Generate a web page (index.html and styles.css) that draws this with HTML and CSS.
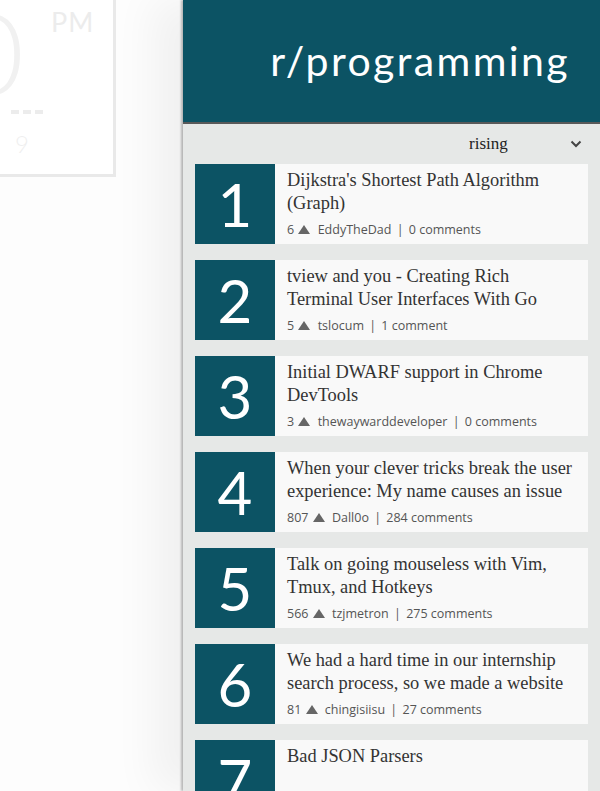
FILE: index.html
```html
<!DOCTYPE html>
<html>
<head>
<meta charset="utf-8">
<link rel="stylesheet" href="styles.css">
</head>
<body>
<div class="page">
  <div class="backdrop">
    <div class="clock">
      <span class="clock-big">0</span>
      <span class="clock-ampm">PM</span>
      <div class="clock-dashes"><i></i><i></i><i></i></div>
      <span class="clock-date">9</span>
    </div>
  </div>
  <aside class="panel">
    <header class="panel-head"><h1>r/programming</h1></header>
    <div class="sortbar">
      <span class="sort-label">rising</span>
      <svg class="chev" width="12" height="8" viewBox="0 0 12 8"><path d="M1.5 1.5 L6 6 L10.5 1.5" fill="none" stroke="#444" stroke-width="2"/></svg>
    </div>
    <ul class="posts">
      <li class="post"><div class="rank">1</div><div class="body"><div class="title">Dijkstra's Shortest Path Algorithm (Graph)</div><div class="meta">6 <span class="up"></span> EddyTheDad <span class="sep">|</span> 0 comments</div></div></li>
      <li class="post"><div class="rank">2</div><div class="body"><div class="title">tview and you - Creating Rich Terminal User Interfaces With Go</div><div class="meta">5 <span class="up"></span> tslocum <span class="sep">|</span> 1 comment</div></div></li>
      <li class="post"><div class="rank">3</div><div class="body"><div class="title">Initial DWARF support in Chrome DevTools</div><div class="meta">3 <span class="up"></span> thewaywarddeveloper <span class="sep">|</span> 0 comments</div></div></li>
      <li class="post"><div class="rank">4</div><div class="body"><div class="title">When your clever tricks break the user experience: My name causes an issue</div><div class="meta">807 <span class="up"></span> Dall0o <span class="sep">|</span> 284 comments</div></div></li>
      <li class="post"><div class="rank">5</div><div class="body"><div class="title">Talk on going mouseless with Vim, Tmux, and Hotkeys</div><div class="meta">566 <span class="up"></span> tzjmetron <span class="sep">|</span> 275 comments</div></div></li>
      <li class="post"><div class="rank">6</div><div class="body"><div class="title">We had a hard time in our internship search process, so we made a website</div><div class="meta">81 <span class="up"></span> chingisiisu <span class="sep">|</span> 27 comments</div></div></li>
      <li class="post"><div class="rank">7</div><div class="body"><div class="title">Bad JSON Parsers</div></div></li>
    </ul>
  </aside>
</div>
</body>
</html>
```
FILE: styles.css
```css
html, body { margin: 0; padding: 0; }
body { background: #fff; width: 600px; height: 791px; overflow: hidden; }
.page { display: flex; height: 791px; }

.backdrop { width: 183px; flex: none; position: relative; overflow: hidden; background: #fdfdfd; }
.clock {
  position: absolute; left: -60px; top: -10px; width: 170px; height: 181px;
  border: 3px solid #e9e9e9; background: #fff;
  font-family: "Lato", "Liberation Sans", sans-serif; color: #f1f1f1;
}
.clock-big { position: absolute; left: 16px; top: 4px; font-size: 112px; font-weight: 300; line-height: 110px; color: #f1f1f1; }
.clock-ampm { position: absolute; left: 108px; top: 12px; font-size: 27px; color: #ececec; letter-spacing: 1px; }
.clock-dashes { position: absolute; left: 68px; top: 117px; display: flex; gap: 4px; }
.clock-dashes i { display: block; width: 8px; height: 4px; background: #ececec; }
.clock-date { position: absolute; left: 72px; top: 136px; font-size: 24px; font-weight: 300; color: #efefef; }

.panel {
  flex: 1; background: #e6e8e7; position: relative;
  box-shadow: -2px 0 2px rgba(0,0,0,0.25), -30px 0 40px rgba(0,0,0,0.05);
}
.panel-head {
  height: 122px; background: #0c5364; border-bottom: 2px solid #595959;
  display: flex; align-items: center; justify-content: flex-end; padding-right: 30px;
}
.panel-head h1 {
  margin: 0; color: #fff; font-family: "Lato", "Noto Sans", sans-serif;
  font-weight: 400; font-size: 41px; letter-spacing: 2.4px; margin-top: -2px;
}
.sortbar { height: 40px; display: flex; align-items: center; position: relative; }
.sort-label { font-family: "Liberation Serif", "DejaVu Serif", serif; font-size: 17px; color: #222; margin-left: 286px; margin-top: -1px; }
.chev { position: absolute; right: 18px; top: 16px; }

.posts { list-style: none; margin: 0; padding: 0 12px 0 12px; display: flex; flex-direction: column; gap: 16px; }
.post { display: flex; height: 80px; background: #f9f9f9; overflow: hidden; }
.rank {
  width: 80px; flex: none; background: #0c5364; color: #fff;
  font-family: "Lato", "Liberation Sans", sans-serif; font-weight: 400; font-size: 60px;
  display: flex; align-items: center; justify-content: center; line-height: 1;
}
.body { padding: 5px 10px 0 12px; display: flex; flex-direction: column; }
.title { font-family: "Liberation Serif", "DejaVu Serif", serif; font-size: 18.4px; line-height: 23px; height: 46px; color: #333; }
.meta { font-family: "Open Sans", "Noto Sans", sans-serif; font-size: 12.5px; color: #555; margin-top: 6px; white-space: nowrap; }
.sep { margin: 0 2px; }
.up { display: inline-block; width: 0; height: 0; border-left: 6px solid transparent; border-right: 6px solid transparent; border-bottom: 9px solid #666; margin: 0 4px 0 1px; }
```
